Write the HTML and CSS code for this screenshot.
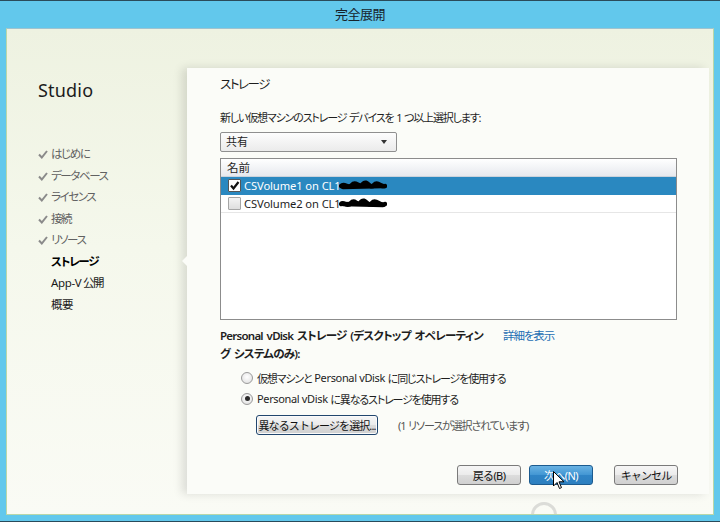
FILE: index.html
```html
<!DOCTYPE html>
<html lang="ja">
<head>
  <meta charset="UTF-8">
  <title>完全展開</title>
  <link rel="stylesheet" href="styles.css">
</head>
<body>
  <div class="window">
    <div class="titlebar">完全展開</div>
    <div class="client">
      <aside class="sidebar">
        <div class="brand">Studio</div>
        <ul class="steps">
          <li class="done"><svg class="tick" viewBox="0 0 10 9"><path d="M1 4.5 L3.8 7.5 L9 1"/></svg>はじめに</li>
          <li class="done"><svg class="tick" viewBox="0 0 10 9"><path d="M1 4.5 L3.8 7.5 L9 1"/></svg>データベース</li>
          <li class="done"><svg class="tick" viewBox="0 0 10 9"><path d="M1 4.5 L3.8 7.5 L9 1"/></svg>ライセンス</li>
          <li class="done"><svg class="tick" viewBox="0 0 10 9"><path d="M1 4.5 L3.8 7.5 L9 1"/></svg>接続</li>
          <li class="done"><svg class="tick" viewBox="0 0 10 9"><path d="M1 4.5 L3.8 7.5 L9 1"/></svg>リソース</li>
          <li class="current">ストレージ</li>
          <li><span class="lat">App-V</span> 公開</li>
          <li>概要</li>
        </ul>
      </aside>

      <main class="page">
        <span class="notch"></span>
        <h2>ストレージ</h2>
        <p class="lead">新しい仮想マシンのストレージ デバイスを 1 つ以上選択します:</p>
        <div class="select">共有<span class="caret"></span></div>

        <div class="listbox">
          <div class="lb-head">名前</div>
          <div class="lb-row selected">
            <span class="cb checked"><svg viewBox="0 0 11 11"><path d="M2 5.5 L4.5 8.5 L9.5 2"/></svg></span>
            CSVolume1 on CL1<svg class="redact" viewBox="0 0 48 12"><path d="M2 6 C6 2 9 10 13 5 S20 9 24 4 S31 10 35 5 S42 8 46 6"/><path d="M4 7 L44 6"/></svg>
          </div>
          <div class="lb-row">
            <span class="cb"></span>
            CSVolume2 on CL1<svg class="redact" viewBox="0 0 48 12"><path d="M2 6 C5 3 8 10 12 5 S18 9 22 4 S29 10 33 5 S41 9 46 6"/><path d="M4 6 L44 7"/></svg>
          </div>
        </div>

        <div class="pvd">
          <div class="pvd-title">Personal vDisk ストレージ (デスクトップ オペレーティング システムのみ):</div>
          <a class="more">詳細を表示</a>
        </div>

        <div class="radios">
          <label class="radio"><span class="dot"></span>仮想マシンと <span class="lat">Personal vDisk</span> に同じストレージを使用する</label>
          <label class="radio on"><span class="dot"></span><span class="lat">Personal vDisk</span> に異なるストレージを使用する</label>
        </div>

        <div class="pick">
          <button class="btn focus">異なるストレージを選択...</button>
          <span class="note">(1 リソースが選択されています)</span>
        </div>

        <div class="actions">
          <button class="btn">戻る(B)</button>
          <button class="btn primary">次へ(N)</button>
          <button class="btn cancel">キャンセル</button>
        </div>

        <svg class="cursor" viewBox="0 0 12 19"><path d="M0.5 0.5 L0.5 15 L4 11.5 L6.5 17.5 L8.5 16.6 L6 10.8 L11 10.8 Z"/></svg>
      </main>

      <span class="wm-logo"></span>
    </div>
  </div>
</body>
</html>
```

FILE: styles.css
```css
* {
  box-sizing: border-box;
}
body {
  margin: 0;
  width: 720px;
  height: 522px;
  overflow: hidden;
  font-family: "Noto Sans", "Noto Sans CJK JP", sans-serif;
  font-feature-settings: "palt";
  color: #1e1e1e;
}
.lat {
  letter-spacing: -0.35px;
  word-spacing: 0;
}
.window {
  width: 720px;
  height: 522px;
  background: #62c8ec;
  border-top: 1px solid #2a4b5a;
  border-bottom: 1px solid #2a4b5a;
  display: flex;
  flex-direction: column;
}
.titlebar {
  height: 27px;
  line-height: 27px;
  text-align: center;
  font-size: 13px;
  color: #16232b;
  letter-spacing: -0.5px;
}
.client {
  position: relative;
  flex: 1;
  margin: 0 6px 6px;
  display: flex;
  overflow: hidden;
  background: linear-gradient(180deg, #eef2e1 0%, #f5f8ec 45%, #fafbf5 100%);
  border: 1px solid #b9d7a8;
  border-top-color: #9fc3cf;
}

/* sidebar */
.sidebar {
  width: 180px;
  flex: none;
  padding: 49px 0 0 31px;
}
.brand {
  font-size: 18px;
  line-height: 24px;
  color: #1c1c1c;
  letter-spacing: 0.2px;
}
.steps {
  list-style: none;
  margin: 41px 0 0;
  padding: 0;
}
.steps li {
  height: 21.5px;
  line-height: 21.5px;
  font-size: 11.5px;
  letter-spacing: -1.4px;
  padding-left: 13px;
  position: relative;
  color: #1a1a1a;
}
.steps li.done {
  color: #616161;
}
.steps li.current {
  font-weight: bold;
  color: #000;
  letter-spacing: -1.2px;
}
.steps li:last-child {
  letter-spacing: -0.6px;
}
.tick {
  position: absolute;
  left: 0;
  top: 7px;
  width: 10px;
  height: 9px;
  fill: none;
  stroke: #8a8a8a;
  stroke-width: 2;
}

/* main panel */
.page {
  position: relative;
  flex: 1;
  margin: 39px 4px 20px 0;
  padding: 8px 32px 0 33px;
  background: #fbfcf8;
  box-shadow: -5px 0 9px rgba(0, 0, 0, 0.12);
}
.notch {
  position: absolute;
  left: -5px;
  top: 188px;
  width: 0;
  height: 0;
  border-top: 5px solid transparent;
  border-bottom: 5px solid transparent;
  border-right: 5px solid #fbfcf8;
}
h2 {
  margin: 0;
  font-size: 12.5px;
  font-weight: normal;
  line-height: 18px;
  letter-spacing: -1.4px;
}
.lead {
  margin: 16px 0 0;
  font-size: 11px;
  line-height: 16px;
  letter-spacing: -1.15px;
  word-spacing: 1px;
}
.select {
  position: relative;
  margin-top: 6px;
  width: 177px;
  height: 20px;
  line-height: 18px;
  padding-left: 5px;
  font-size: 11px;
  border: 1px solid #8f8f8f;
  border-radius: 2px;
  background: linear-gradient(180deg, #fdfdfd, #ebebeb);
}
.caret {
  position: absolute;
  right: 9px;
  top: 7px;
  border-left: 3.5px solid transparent;
  border-right: 3.5px solid transparent;
  border-top: 4px solid #333;
}
.listbox {
  margin-top: 6px;
  height: 162px;
  border: 1px solid #8c8c8c;
  background: #fff;
}
.lb-head {
  height: 18px;
  line-height: 17px;
  padding-left: 6px;
  font-size: 11.5px;
  background: linear-gradient(180deg, #ffffff, #e6e9ee);
  border-bottom: 1px solid #cbd3dc;
}
.lb-row {
  display: flex;
  align-items: center;
  height: 18px;
  padding-left: 7px;
  font-size: 11.2px;
  letter-spacing: -0.1px;
  border-bottom: 1px solid #e6e6e6;
}
.lb-row.selected {
  background: #2a88c0;
  color: #fff;
  border-bottom-color: #2a88c0;
}
.cb {
  width: 13px;
  height: 13px;
  margin-right: 3px;
  border: 1px solid #a5a5a5;
  border-radius: 1px;
  background: linear-gradient(180deg, #f4f4f4, #dedede);
  flex: none;
}
.cb.checked {
  background: #fff;
  border-color: #555;
}
.cb svg {
  display: block;
  width: 11px;
  height: 11px;
  fill: none;
  stroke: #111;
  stroke-width: 2.2;
}
.redact {
  width: 48px;
  height: 12px;
  margin-left: -2px;
  fill: none;
  stroke: #000;
  stroke-width: 4.5;
  stroke-linecap: round;
}

.pvd {
  display: flex;
  margin-top: 7px;
}
.pvd-title {
  width: 268px;
  font-size: 11.5px;
  line-height: 18px;
  font-weight: 600;
  letter-spacing: -0.75px;
  word-spacing: 1.5px;
}
.more {
  margin-left: 15px;
  font-size: 11.5px;
  line-height: 18px;
  color: #1d6eb3;
  letter-spacing: -1.1px;
}
.radios {
  margin-top: 4px;
  padding-left: 21px;
}
.radio {
  display: flex;
  align-items: center;
  height: 21px;
  font-size: 11px;
  letter-spacing: -1.15px;
  word-spacing: 1px;
  white-space: pre;
}
.dot {
  position: relative;
  width: 12px;
  height: 12px;
  margin-right: 4px;
  border: 1px solid #9a9a9a;
  border-radius: 50%;
  background: radial-gradient(circle at 50% 40%, #ffffff, #dcdcdc);
}
.radio.on .dot::after {
  content: "";
  position: absolute;
  left: 2.5px;
  top: 2.5px;
  width: 5px;
  height: 5px;
  border-radius: 50%;
  background: #2b2b2b;
}
.pick {
  display: flex;
  align-items: center;
  margin-top: 6px;
  padding-left: 36px;
}
.note {
  margin-left: 20px;
  font-size: 11px;
  color: #555;
  letter-spacing: -1.1px;
  word-spacing: 1px;
}
.btn {
  height: 20px;
  padding: 0;
  white-space: nowrap;
  font-family: inherit;
  font-size: 11px;
  letter-spacing: -0.9px;
  color: #111;
  border: 1px solid #7a7a7a;
  border-radius: 3px;
  background: linear-gradient(180deg, #f6f6f6 0%, #ebebeb 50%, #dcdcdc 51%, #d0d0d0 100%);
}
.btn.focus {
  width: 122px;
  border-color: #21466e;
  box-shadow: inset 0 0 0 1px #fafafa;
}
.actions {
  display: flex;
  justify-content: flex-end;
  margin-top: 30px;
  margin-right: -1px;
}
.actions .btn {
  width: 64px;
  letter-spacing: -0.6px;
}
.actions .primary {
  margin-left: 8px;
  color: #fff;
  border-color: #1c5b8f;
  background: linear-gradient(180deg, #69b2e3 0%, #4296d3 50%, #2f84c6 51%, #2d7fbf 100%);
}
.actions .cancel {
  margin-left: 21px;
  letter-spacing: -0.9px;
}
.cursor {
  position: absolute;
  left: 366px;
  top: 403px;
  width: 12px;
  height: 19px;
  fill: #fff;
  stroke: #000;
  stroke-width: 1;
}
.wm-logo {
  position: absolute;
  left: 524px;
  bottom: -14px;
  width: 26px;
  height: 26px;
  border: 3px solid rgba(150, 150, 150, 0.3);
  border-radius: 50%;
}
```
